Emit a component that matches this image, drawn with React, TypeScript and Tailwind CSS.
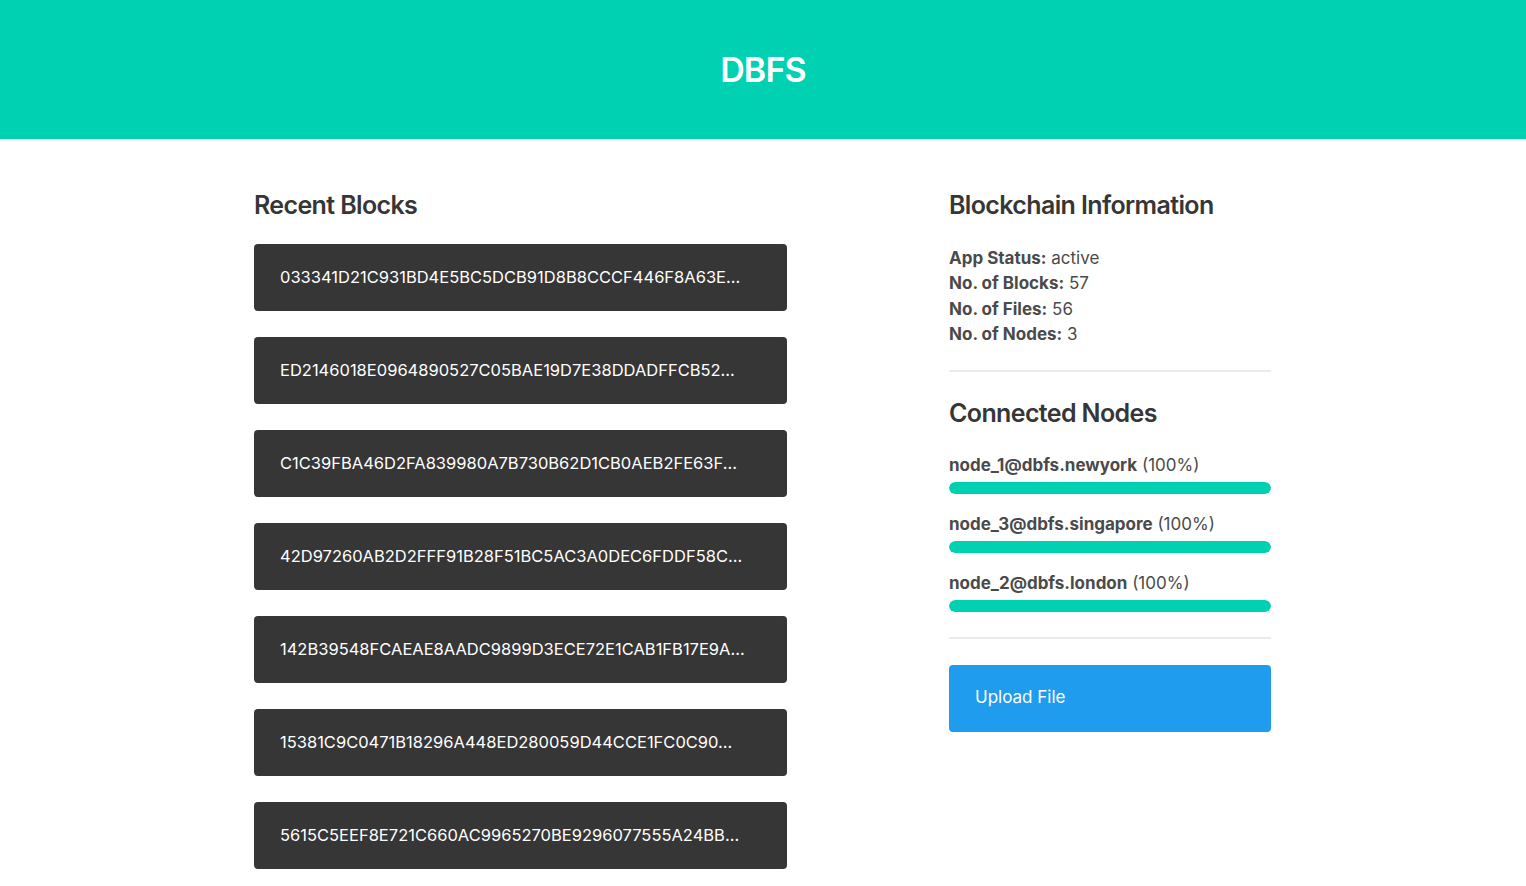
const blocks = [
  "033341D21C931BD4E5BC5DCB91D8B8CCCF446F8A63E...",
  "ED2146018E0964890527C05BAE19D7E38DDADFFCB52...",
  "C1C39FBA46D2FA839980A7B730B62D1CB0AEB2FE63F...",
  "42D97260AB2D2FFF91B28F51BC5AC3A0DEC6FDDF58C...",
  "142B39548FCAEAE8AADC9899D3ECE72E1CAB1FB17E9A...",
  "15381C9C0471B18296A448ED280059D44CCE1FC0C90...",
  "5615C5EEF8E721C660AC9965270BE9296077555A24BB...",
];

const info = [
  { label: "App Status:", value: "active" },
  { label: "No. of Blocks:", value: "57" },
  { label: "No. of Files:", value: "56" },
  { label: "No. of Nodes:", value: "3" },
];

const nodes = [
  { name: "node_1@dbfs.newyork", pct: 100 },
  { name: "node_3@dbfs.singapore", pct: 100 },
  { name: "node_2@dbfs.london", pct: 100 },
];

export default function App() {
  return (
    <div className="min-h-screen bg-white text-[#4a4a4a] font-['Inter',sans-serif]">
      {/* Hero */}
      <header className="h-[139px] bg-[#00d1b2] flex items-center justify-center">
        <h1 className="text-[34px] font-semibold text-white tracking-tight">DBFS</h1>
      </header>

      <main className="w-[1017px] ml-[254px] flex justify-between pt-[48px] pb-4">
        {/* Recent blocks */}
        <section className="w-[533px]">
          <h2 className="text-[25px] leading-[36px] font-semibold text-[#363636] tracking-tight mb-[21px]">
            Recent Blocks
          </h2>
          <div className="flex flex-col gap-[26px]">
            {blocks.map((b) => (
              <div
                key={b}
                className="h-[67px] bg-[#363636] rounded-[4px] flex items-center pl-[26px] text-white text-[16.5px]"
              >
                {b}
              </div>
            ))}
          </div>
        </section>

        {/* Blockchain info */}
        <aside className="w-[322px]">
          <h2 className="text-[25px] leading-[36px] font-semibold text-[#363636] tracking-tight mb-[23px]">
            Blockchain Information
          </h2>
          <div className="text-[17px] leading-[25.4px]">
            {info.map((i) => (
              <p key={i.label}>
                <strong className="font-bold text-[#4a4a4a]">{i.label}</strong> {i.value}
              </p>
            ))}
          </div>

          <hr className="border-0 h-[2px] bg-[#ebebeb] mt-[22px] mb-[23px]" />

          <h2 className="text-[25px] leading-[36px] font-semibold text-[#363636] tracking-tight mb-[22px]">
            Connected Nodes
          </h2>
          <div className="flex flex-col gap-[18px]">
            {nodes.map((n) => (
              <div key={n.name}>
                <p className="text-[17px] leading-[25px]">
                  <strong className="font-bold">{n.name}</strong>&nbsp;({n.pct}%)
                </p>
                <div className="mt-[4px] h-[12px] rounded-full bg-[#ededed] overflow-hidden">
                  <div className="h-full rounded-full bg-[#00d1b2]" style={{ width: `${n.pct}%` }} />
                </div>
              </div>
            ))}
          </div>

          <hr className="border-0 h-[2px] bg-[#ebebeb] mt-[25px] mb-[26px]" />

          <button className="w-full h-[67px] bg-[#209cee] rounded-[4px] text-white text-[17px] text-left pl-[26px]">
            Upload File
          </button>
        </aside>
      </main>
    </div>
  );
}
